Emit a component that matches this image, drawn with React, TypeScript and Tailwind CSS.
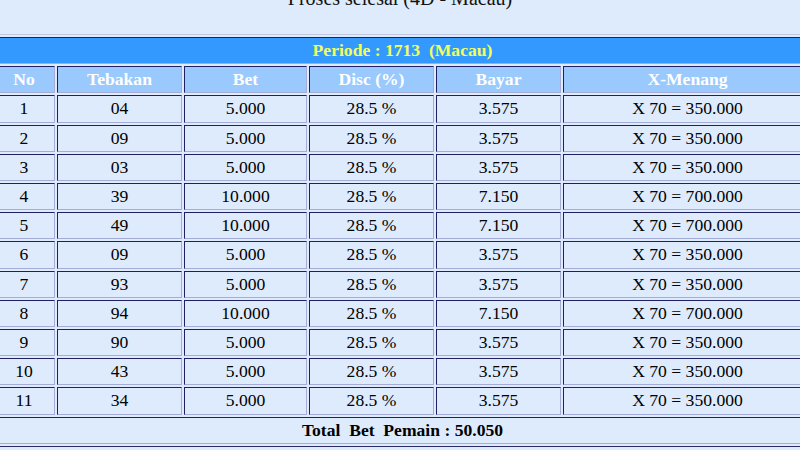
const rows = [
  { no: 1, tebakan: "04", bet: "5.000", bayar: "3.575", menang: "X 70 = 350.000" },
  { no: 2, tebakan: "09", bet: "5.000", bayar: "3.575", menang: "X 70 = 350.000" },
  { no: 3, tebakan: "03", bet: "5.000", bayar: "3.575", menang: "X 70 = 350.000" },
  { no: 4, tebakan: "39", bet: "10.000", bayar: "7.150", menang: "X 70 = 700.000" },
  { no: 5, tebakan: "49", bet: "10.000", bayar: "7.150", menang: "X 70 = 700.000" },
  { no: 6, tebakan: "09", bet: "5.000", bayar: "3.575", menang: "X 70 = 350.000" },
  { no: 7, tebakan: "93", bet: "5.000", bayar: "3.575", menang: "X 70 = 350.000" },
  { no: 8, tebakan: "94", bet: "10.000", bayar: "7.150", menang: "X 70 = 700.000" },
  { no: 9, tebakan: "90", bet: "5.000", bayar: "3.575", menang: "X 70 = 350.000" },
  { no: 10, tebakan: "43", bet: "5.000", bayar: "3.575", menang: "X 70 = 350.000" },
  { no: 11, tebakan: "34", bet: "5.000", bayar: "3.575", menang: "X 70 = 350.000" },
];

const cell =
  "border border-t-[#1f1f62] border-l-[#1f1f62] border-b-[#a6acd8] border-r-[#a6acd8] p-0 text-center leading-[25.2px]";

export default function App() {
  return (
    <div className="w-[800px] h-[450px] overflow-hidden bg-[#deebfc] font-['Liberation_Serif',serif] text-black">
      <div className="mt-[-14px] text-center text-[20px] leading-[24px] text-[#111]">
        Proses selesai (4D - Macau)
      </div>

      <table className="mt-[24px] ml-[-10px] w-[825px] table-fixed border-separate border-spacing-[2px] border border-t-[#c3c7de] border-l-[#c3c7de] border-b-[#2a2a66] border-r-[#2a2a66] text-[17.6px]">
        <colgroup>
          <col className="w-[62px]" />
          <col className="w-[125px]" />
          <col className="w-[123px]" />
          <col className="w-[125px]" />
          <col className="w-[125px]" />
          <col />
        </colgroup>
        <tbody>
          <tr>
            <td colSpan={6} className={`${cell} bg-[#3399ff] font-bold text-[#f4ff5a] whitespace-pre`}>
              {"Periode : 1713  (Macau)"}
            </td>
          </tr>
          <tr className="bg-[#99c9fd] font-bold text-white">
            <td className={cell}>No</td>
            <td className={cell}>Tebakan</td>
            <td className={cell}>Bet</td>
            <td className={cell}>Disc (%)</td>
            <td className={cell}>Bayar</td>
            <td className={cell}>X-Menang</td>
          </tr>
          {rows.map((r) => (
            <tr key={r.no}>
              <td className={cell}>{r.no}</td>
              <td className={cell}>{r.tebakan}</td>
              <td className={cell}>{r.bet}</td>
              <td className={cell}>28.5 %</td>
              <td className={cell}>{r.bayar}</td>
              <td className={cell}>{r.menang}</td>
            </tr>
          ))}
          <tr>
            <td colSpan={6} className={`${cell} font-bold whitespace-pre`}>
              {"Total  Bet  Pemain : 50.050"}
            </td>
          </tr>
        </tbody>
      </table>
    </div>
  );
}
